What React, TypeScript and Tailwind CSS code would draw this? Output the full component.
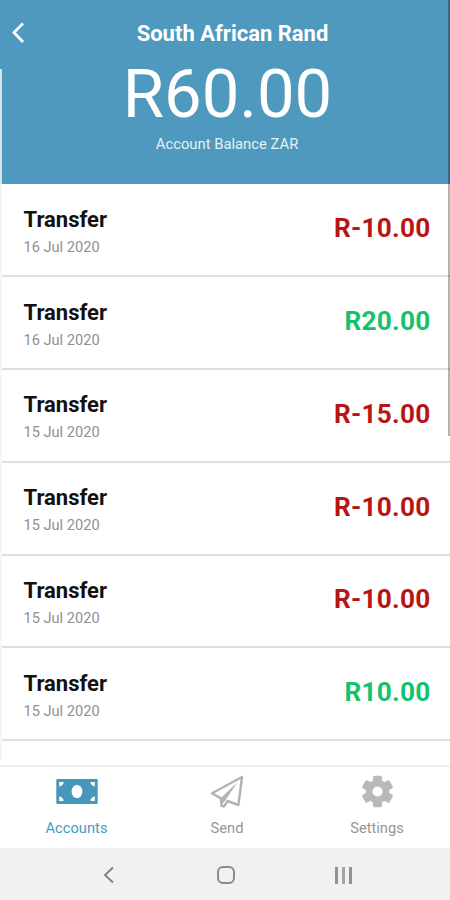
import React from "react";

const transactions = [
  { date: "16 Jul 2020", amount: -10 },
  { date: "16 Jul 2020", amount: 20 },
  { date: "15 Jul 2020", amount: -15 },
  { date: "15 Jul 2020", amount: -10 },
  { date: "15 Jul 2020", amount: -10 },
  { date: "15 Jul 2020", amount: 10 },
];

const BanknoteIcon: React.FC = () => (
  <svg width="42" height="33" viewBox="0 0 42 33">
    <rect x="0.3" y="4" width="41.4" height="25" rx="1.2" fill="#4796bb" />
    <ellipse cx="21" cy="16.5" rx="5.4" ry="6.6" fill="white" />
    <path
      d="M3.2 7H7.6A4.4 4.4 0 0 1 3.2 11.4ZM38.8 7V11.4A4.4 4.4 0 0 1 34.4 7ZM3.2 26V21.6A4.4 4.4 0 0 1 7.6 26ZM38.8 26H34.4A4.4 4.4 0 0 1 38.8 21.6Z"
      fill="white"
    />
  </svg>
);

const PlaneIcon: React.FC = () => (
  <svg width="34" height="33" viewBox="0 0 34 33" strokeLinejoin="round">
    <path
      d="M2 18.2L32 2L28.4 30L17.5 26L14 31.3L11.5 30.9L11 23.4Z"
      fill="none"
      stroke="#b3b3b3"
      strokeWidth="2.4"
    />
    <path d="M27.5 7L11 23L12 29.5L16 24.5Z" fill="#b3b3b3" />
    <path d="M13.8 27V28.4L15 26.8Z" fill="white" />
  </svg>
);

const GearIcon: React.FC = () => (
  <svg width="33" height="33" viewBox="0 0 33 33" fill="#b9b9b9">
    <circle cx="16.5" cy="16.5" r="11.8" />
    <rect x="12" y="0.7" width="9" height="31.6" rx="1.8" />
    <rect
      x="12"
      y="0.7"
      width="9"
      height="31.6"
      rx="1.8"
      transform="rotate(60 16.5 16.5)"
    />
    <rect
      x="12"
      y="0.7"
      width="9"
      height="31.6"
      rx="1.8"
      transform="rotate(120 16.5 16.5)"
    />
    <circle cx="16.5" cy="16.5" r="5.1" fill="white" />
  </svg>
);

const Header: React.FC = () => {
  return (
    <header className="relative h-[183.5px] shrink-0 bg-[#4e99bd] text-white">
      <div className="flex h-[66px] items-center pl-[11px]">
        <svg width="14" height="22" viewBox="0 0 14 22" fill="none" className="shrink-0">
          <path d="M12 1.5L3 10.5L12 20" stroke="white" strokeWidth="2.8" />
        </svg>
        <h1 className="flex-1 text-center text-[22px] font-bold">
          South African Rand
        </h1>
        <div className="w-[10px]" />
      </div>
      <p className="-mt-1.5 pl-[5px] text-center text-[67px] leading-[68px]">
        R60.00
      </p>
      <p className="mt-[6px] pl-1 text-center text-[14.8px] leading-5 text-[#e4f1f7]">
        Account Balance ZAR
      </p>
      <div className="absolute top-[69px] bottom-0 left-0 w-[2px] bg-[#d5e6ee]" />
    </header>
  );
};

const TransactionRow: React.FC<{ date: string; amount: number }> = ({
  date,
  amount,
}) => {
  return (
    <li className="flex h-[92.8px] items-start justify-between border-b-2 border-[#dedede] pr-[19.5px] pl-[23.5px]">
      <div className="pt-[21.4px]">
        <b className="block text-[22px] leading-7">Transfer</b>
        <span className="block text-[14.6px] leading-[26px] text-[#909090]">
          {date}
        </span>
      </div>
      <b
        className={`pt-[25.7px] text-[26.2px] leading-9 tracking-[0.25px] ${
          amount < 0 ? "text-[#b91414]" : "text-[#13c26b]"
        }`}
      >
        R{amount.toFixed(2)}
      </b>
    </li>
  );
};

const TabBar: React.FC = () => {
  return (
    <nav className="grid h-[83px] shrink-0 grid-cols-3 border-t-2 border-[#eeeeee] bg-white text-[14.7px] leading-5 text-[#969696]">
      <div className="flex flex-col items-center gap-[10px] pt-[8px] pl-[3px] text-[#3f9ebf]">
        <BanknoteIcon />
        <span>Accounts</span>
      </div>
      <div className="flex flex-col items-center gap-[10px] pt-[8px] pl-[4px]">
        <PlaneIcon />
        <span>Send</span>
      </div>
      <div className="flex flex-col items-center gap-[10px] pt-[8px] pl-[4px]">
        <GearIcon />
        <span>Settings</span>
      </div>
    </nav>
  );
};

const SystemBar: React.FC = () => {
  return (
    <div className="flex h-[52px] shrink-0 items-center bg-[#f1f1f1] pt-[2px] pl-[103px] text-[#808080]">
      <svg width="11" height="18" viewBox="0 0 11 18" fill="none">
        <path d="M10 1.5L2 9L10 16.5" stroke="currentColor" strokeWidth="1.9" />
      </svg>
      <div className="ml-[103px] h-[18px] w-[18px] rounded-[6px] border-2 border-[#8a8a8a]" />
      <div className="ml-[100px] flex h-[17px] gap-[4px]">
        <div className="w-[3px] bg-[#929292]" />
        <div className="w-[3px] bg-[#a5a5a5]" />
        <div className="w-[3px] bg-[#929292]" />
      </div>
    </div>
  );
};

const App: React.FC = () => {
  return (
    <div className="relative flex h-[900px] w-[450px] flex-col overflow-hidden bg-white font-['Roboto',sans-serif] text-[#111111]">
      <Header />
      <ul className="relative flex-1 overflow-hidden pt-px">
        {transactions.map((item, index) => (
          <TransactionRow key={index} date={item.date} amount={item.amount} />
        ))}
        <div className="absolute top-0 bottom-[5px] left-0 w-[2px] bg-[#f5f5f5]" />
      </ul>
      <TabBar />
      <SystemBar />
      {/* scroll indicator */}
      <div className="absolute top-0 right-0 h-[436px] w-[2px] bg-black/30" />
    </div>
  );
};
export default App;
